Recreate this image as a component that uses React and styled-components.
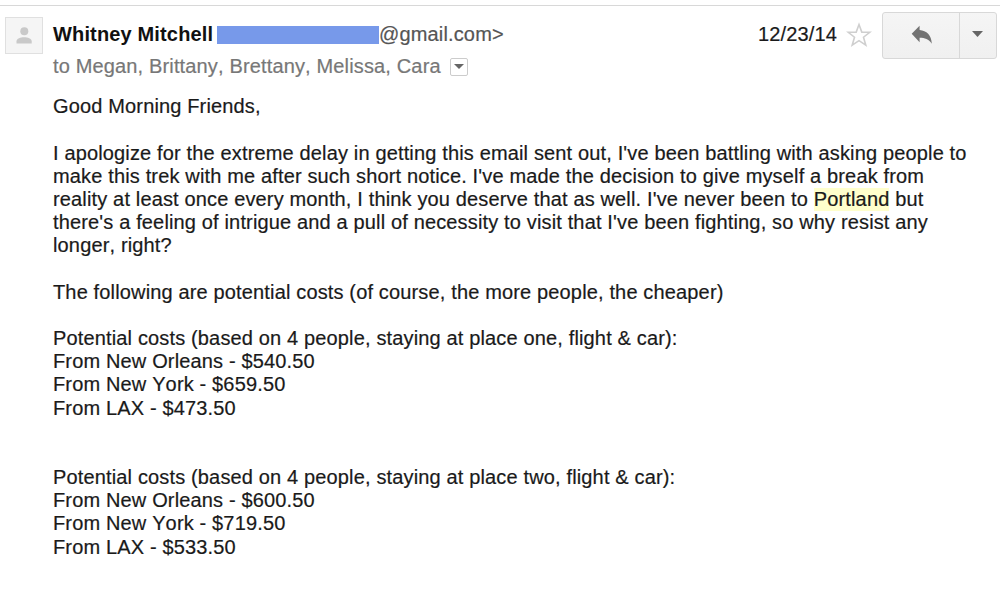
import React from "react";
import styled, { createGlobalStyle } from "styled-components";

const paragraphs = [
    ["Good Morning Friends,"],
    [
        "I apologize for the extreme delay in getting this email sent out, I've been battling with asking people to",
        "make this trek with me after such short notice. I've made the decision to give myself a break from",
        "reality at least once every month, I think you deserve that as well. I've never been to Portland but",
        "there's a feeling of intrigue and a pull of necessity to visit that I've been fighting, so why resist any",
        "longer, right?",
    ],
    ["The following are potential costs (of course, the more people, the cheaper)"],
    [
        "Potential costs (based on 4 people, staying at place one, flight & car):",
        "From New Orleans - $540.50",
        "From New York - $659.50",
        "From LAX - $473.50",
    ],
    [],
    [
        "Potential costs (based on 4 people, staying at place two, flight & car):",
        "From New Orleans - $600.50",
        "From New York - $719.50",
        "From LAX - $533.50",
    ],
];

const searchTerm = "Portland";

const App = () => {
    // marks the searched word wherever it appears in a line
    const highlight = (line) =>
        line.split(new RegExp(`(${searchTerm})`)).map((part, i) =>
            part === searchTerm ? <Highlight key={i}>{part}</Highlight> : part
        );

    return (
        <>
            <GlobalStyle />
            <Message>
                <Header>
                    <Avatar>
                        <svg width="16" height="17" viewBox="0 0 16 17" fill="#c9c9c9">
                            <circle cx="8.3" cy="4.3" r="4" />
                            <path d="M0.5 16.5V14.3C0.5 11.4 4.6 10.2 8.1 10.2S15.7 11.4 15.7 14.3V16.5Z" />
                        </svg>
                    </Avatar>
                    <Details>
                        <Sender>
                            <Name>Whitney Mitchell</Name>
                            <Redacted />
                            <Address>@gmail.com&gt;</Address>
                        </Sender>
                        <Recipients>
                            <span>to Megan, Brittany, Brettany, Melissa, Cara</span>
                            <DetailsButton aria-label="Show details">
                                <svg width="10" height="5" viewBox="0 0 10 5"><path d="M0 0H10L5 5Z" fill="#666" /></svg>
                            </DetailsButton>
                        </Recipients>
                    </Details>
                    <DateText>12/23/14</DateText>
                    <Star width="26" height="26" viewBox="0 0 26 26">
                        <path d="M13 2.5L15.8 10.1L23.8 10.3L17.5 15.2L19.8 23.2L13 18.6L6.2 23.2L8.5 15.2L2.2 10.3L10.2 10.1Z" fill="#fff" stroke="#cfcfcf" strokeWidth="1.6" />
                    </Star>
                    <Actions>
                        <ReplyButton aria-label="Reply">
                            <svg width="22" height="20" viewBox="0 0 22 20">
                                <path d="M0.7 8.8L8.6 0.7V5C15.5 5.5 20.5 10 20.8 18.7C17.5 14 14 12.8 8.6 12.8V17.2Z" fill="#737373" />
                            </svg>
                        </ReplyButton>
                        <MoreButton aria-label="More">
                            <svg width="11" height="6" viewBox="0 0 11 6"><path d="M0 0H11L5.5 6Z" fill="#666" /></svg>
                        </MoreButton>
                    </Actions>
                </Header>
                <Body>
                    {paragraphs.map((lines, i) => (
                        <Paragraph key={i}>
                            {lines.map((line, j) => <Line key={j}>{highlight(line)}</Line>)}
                        </Paragraph>
                    ))}
                </Body>
            </Message>
        </>
    );
};

export default App

const GlobalStyle = createGlobalStyle`
* {
    box-sizing: border-box;
}
body {
    margin: 0;
    background: #fff;
    overflow: hidden;
    font-family: "Liberation Sans", Arial, sans-serif;
    font-kerning: none;
}
svg {
    display: block;
}
`
const Message = styled.main`
width: 1000px;
height: 589px;
padding-top: 5px;
color: #1a1a1a;
letter-spacing: 0.15px;
-webkit-text-stroke: 0.2px;
`
const Header = styled.header`
display: flex;
align-items: flex-start;
height: 90.2px;
padding-right: 3px;
border-top: 1px solid #d8d8d8;
`
const Avatar = styled.div`
display: flex;
justify-content: center;
align-items: center;
width: 38px;
height: 37px;
margin: 11px 0 0 5px;
background: #f5f5f5;
border: 1px solid #e0e0e0;
`
const Details = styled.div`
flex: 1;
padding: 16px 0 0 10px;
`
const Sender = styled.div`
display: flex;
align-items: center;
height: 24px;
font-size: 20px;
line-height: 24px;
`
const Name = styled.span`
width: 164px;
color: #111;
font-weight: 700;
white-space: nowrap;
-webkit-text-stroke: 0;
`
const Redacted = styled.span`
width: 162px;
height: 18px;
margin-top: 1px;
background: #7799ea;
`
const Address = styled.span`
color: #555;
`
const Recipients = styled.div`
display: flex;
align-items: center;
height: 24px;
margin-top: 8px;
color: #777;
font-size: 20px;
line-height: 24px;
`
const DetailsButton = styled.button`
display: flex;
justify-content: center;
align-items: center;
width: 18px;
height: 18px;
margin: 1px 0 0 9px;
padding: 0;
background: #fff;
border: 1px solid #ccc;
border-radius: 2px;
`
const DateText = styled.span`
margin: 16px 9px 0 0;
font-size: 20px;
line-height: 24px;
`
const Star = styled.svg`
margin-top: 16px;
`
const Actions = styled.div`
display: flex;
width: 115px;
height: 47px;
margin: 6px 0 0 10px;
border: 1px solid #d8d8d8;
border-radius: 3px;
background: linear-gradient(#f5f5f5, #f0f0f0);
`
const ReplyButton = styled.button`
display: flex;
justify-content: center;
align-items: center;
width: 77px;
padding: 0 0 2px 2px;
background: none;
border: 0;
border-right: 1px solid #d8d8d8;
`
const MoreButton = styled.button`
display: flex;
flex: 1;
justify-content: center;
align-items: center;
padding: 0 2px 3px 0;
background: none;
border: 0;
`
const Body = styled.section`
padding-left: 53px;
font-size: 20px;
line-height: 23.18px;
`
const Paragraph = styled.div`
padding-bottom: 23.18px;
`
const Line = styled.div`
white-space: nowrap;
`
const Highlight = styled.span`
padding-bottom: 1px;
background: #ffffcc;
`
